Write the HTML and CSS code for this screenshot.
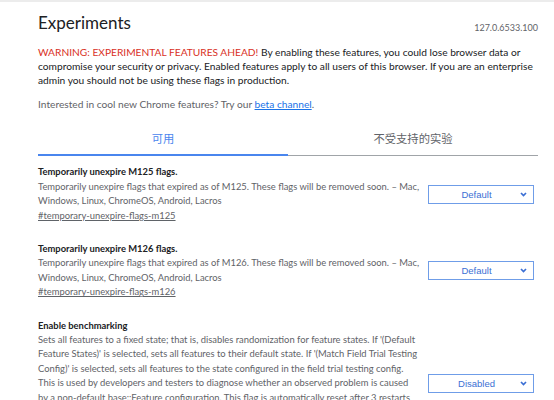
FILE: index.html
```html
<!DOCTYPE html>
<html lang="en">
<head>
<meta charset="utf-8">
<title>Experiments</title>
<link rel="stylesheet" href="styles.css">
</head>
<body>
<div class="topline"></div>
<main class="page">
  <header class="header">
    <h1 class="title">Experiments</h1>
    <span class="version">127.0.6533.100</span>
  </header>
  <p class="warning"><span class="warn-red">WARNING: EXPERIMENTAL FEATURES AHEAD!</span> By enabling these features, you could lose browser data or compromise your security or privacy. Enabled features apply to all users of this browser. If you are an enterprise admin you should not be using these flags in production.</p>
  <p class="promo">Interested in cool new Chrome features? Try our <a class="promo-link" href="#">beta channel</a>.</p>

  <nav class="tabs">
    <div class="tab tab-active">可用</div>
    <div class="tab">不受支持的实验</div>
  </nav>

  <section class="flags">
    <div class="flag">
      <div class="flag-text">
        <h3 class="flag-title">Temporarily unexpire M125 flags.</h3>
        <p class="flag-desc">Temporarily unexpire flags that expired as of M125. These flags will be removed soon. – Mac, Windows, Linux, ChromeOS, Android, Lacros</p>
        <a class="flag-link" href="#">#temporary-unexpire-flags-m125</a>
      </div>
      <div class="flag-action">
        <div class="select"><span class="select-label">Default</span><svg class="chev" width="7" height="5" viewBox="0 0 7 5"><path d="M1 1 L3.5 3.5 L6 1" fill="none" stroke="#3b6fd4" stroke-width="1.7"/></svg></div>
      </div>
    </div>

    <div class="flag">
      <div class="flag-text">
        <h3 class="flag-title">Temporarily unexpire M126 flags.</h3>
        <p class="flag-desc">Temporarily unexpire flags that expired as of M126. These flags will be removed soon. – Mac, Windows, Linux, ChromeOS, Android, Lacros</p>
        <a class="flag-link" href="#">#temporary-unexpire-flags-m126</a>
      </div>
      <div class="flag-action">
        <div class="select"><span class="select-label">Default</span><svg class="chev" width="7" height="5" viewBox="0 0 7 5"><path d="M1 1 L3.5 3.5 L6 1" fill="none" stroke="#3b6fd4" stroke-width="1.7"/></svg></div>
      </div>
    </div>

    <div class="flag">
      <div class="flag-text">
        <h3 class="flag-title">Enable benchmarking</h3>
        <p class="flag-desc">Sets all features to a fixed state; that is, disables randomization for feature states. If '(Default Feature States)' is selected, sets all features to their default state. If '(Match Field Trial Testing Config)' is selected, sets all features to the state configured in the field trial testing config. This is used by developers and testers to diagnose whether an observed problem is caused by a non-default base::Feature configuration. This flag is automatically reset after 3 restarts and will be off from the 4th restart. On the 3rd restart, the flag will remain on. – Mac, Windows, Linux, ChromeOS, Android, Lacros</p>
        <a class="flag-link" href="#">#enable-benchmarking</a>
      </div>
      <div class="flag-action">
        <div class="select"><span class="select-label">Disabled</span><svg class="chev" width="7" height="5" viewBox="0 0 7 5"><path d="M1 1 L3.5 3.5 L6 1" fill="none" stroke="#3b6fd4" stroke-width="1.7"/></svg></div>
      </div>
    </div>
  </section>
</main>
</body>
</html>
```
FILE: styles.css
```css
html, body {
  margin: 0;
  padding: 0;
  background: #ffffff;
}
body {
  font-family: Lato, "Noto Sans CJK SC", sans-serif;
  color: #202124;
  overflow: hidden;
}
.topline {
  height: 2px;
  background: #ececec;
}
.page {
  width: 500px;
  padding: 0 16px 0 38px;
}
.header {
  display: flex;
  justify-content: space-between;
  align-items: flex-start;
  padding-top: 11px;
  height: 32px;
}
.title {
  margin: 0;
  font-size: 17px;
  line-height: 20px;
  font-weight: 400;
  color: #202124;
}
.version {
  margin-top: 9px;
  font-size: 9px;
  line-height: 12px;
  color: #5f6368;
}
.warning {
  margin: 0;
  font-size: 10.2px;
  line-height: 14.2px;
  color: #202124;
}
.warn-red {
  color: #d93025;
}
.promo {
  margin: 9px 0 0;
  font-size: 10.2px;
  line-height: 14.2px;
  color: #5f6368;
}
.promo-link {
  color: #1a73e8;
}
.tabs {
  display: flex;
  margin-top: 12px;
  border-bottom: 1px solid #a0a4a8;
}
.tab {
  flex: 1;
  text-align: center;
  font-family: "Noto Sans CJK SC", sans-serif;
  font-size: 11.3px;
  line-height: 31px;
  color: #5f6368;
}
.tab-active {
  color: #4a86ee;
  border-bottom: 2px solid #4a86ee;
  margin-bottom: -1px;
}
.flags {
  padding-top: 9.5px;
}
.flag {
  display: flex;
  align-items: center;
  margin-bottom: 19px;
}
.flag-text {
  width: 382px;
  flex: none;
}
.flag-title {
  margin: 0;
  font-size: 9.4px;
  font-weight: 700;
  line-height: 14.4px;
  color: #202124;
}
.flag-desc {
  margin: 0;
  font-size: 9.4px;
  line-height: 14.4px;
  color: #5f6368;
}
.flag-link {
  display: block;
  font-size: 9.4px;
  line-height: 14.4px;
  color: #5f6368;
}
.flag-action {
  flex: 1;
  display: flex;
  justify-content: flex-end;
  padding-right: 4px;
}
.select {
  width: 104px;
  height: 17px;
  border: 1px solid #6f9de8;
  display: flex;
  align-items: center;
}
.select-label {
  flex: 1;
  text-align: center;
  padding-left: 4px;
  font-family: "Liberation Sans", Arial, sans-serif;
  font-size: 9.5px;
  color: #3b6fd4;
}
.chev {
  margin-right: 6px;
}
```
